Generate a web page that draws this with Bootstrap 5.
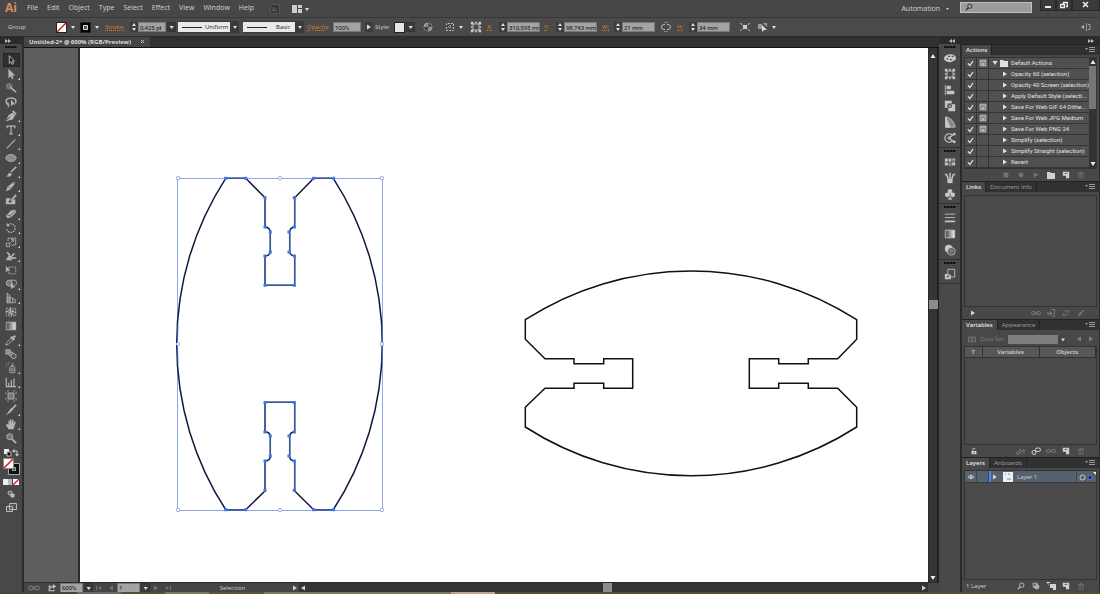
<!DOCTYPE html>
<html lang="en">
<head>
<meta charset="utf-8">
<meta name="viewport" content="width=device-width, initial-scale=1">
<title>Untitled-2* @ 600% (RGB/Preview)</title>
<link href="https://cdn.jsdelivr.net/npm/bootstrap@5.3.0/dist/css/bootstrap.min.css" rel="stylesheet">
<style>
:root{--bar:#484848;--dark:#2e2e2e;--line:#303030;--ink:#d2d2d2;--dim:#747474;--orange:#d5862f;
 --arrow:url("data:image/svg+xml,%3Csvg xmlns='http://www.w3.org/2000/svg' width='8' height='10'%3E%3Cpath d='M2 4h4l-2 3z' fill='%23ddd'/%3E%3C/svg%3E")}
body{font:6px/8px "Open Sans","Noto Sans",sans-serif;color:var(--ink);background:var(--bar);overflow:hidden}
button,input,select{font:inherit;color:inherit;padding:0;margin:0;border:0;background:none;border-radius:0;display:block}
button{display:flex;align-items:center;justify-content:center}
svg{display:block;flex:none}
a{color:inherit;text-decoration:none}
.s10{width:10px;height:10px}.s12{width:12px;height:12px}.s8{width:8px;height:8px}
.menubar{height:17px;font-size:7px;line-height:16px;background:#474747}
.logo{font:bold 12px/16px "Open Sans",sans-serif;color:#d98b61;width:27px;padding-left:5px}
.menus{gap:9px}
.search{width:72px;height:11px;background:#9c9c9c;border:1px solid #c0c0c0;color:#222;margin-top:2px}
.search input{width:58px;height:9px}
.wbtn{height:11px;background:#3a3a3a;border:1px solid #292929;border-top:0;color:#eee}
.wbtn.w-a{width:16px}.wbtn.w-c{width:28px}
.ctrl{display:grid;grid-template-columns:48px 24px 25px 73px 65px 64px 68px 48px 22px 25px 17px 57px 58px 59px 16px 63px 18px 1fr auto;height:20px;padding:0 9px 0 8px;border-top:1px solid #383838;border-bottom:1px solid #2a2a2a;background:#4a4a4a;align-items:center}
.ctrl>*{display:flex;align-items:center}
.cap{color:var(--orange);text-decoration:underline dotted 1px;text-underline-offset:1px}
.w-lab{width:25px}.w-xy{width:12px}.w-op{width:26px}.w-st{width:19px}
.field{height:10px;background:#a3a3a3;color:#111;padding-left:1px;border:1px solid #777;font-family:Roboto,sans-serif}
.f28{width:28px}.f33{width:33px}.f22{width:23px}
.spin{width:8px;height:10px;background:#3c3c3c;color:#ddd}
.pick{appearance:none;width:9px;height:10px;background:var(--arrow) center no-repeat #3a3a3a;color:transparent;margin-left:1px;border:1px solid #333}
.pick.bare{background-color:transparent;border:0}
.brush{appearance:none;width:61px;height:12px;color:#222;padding-left:27px;background:var(--arrow) right center no-repeat,linear-gradient(#222,#222) 4px center/20px 1px no-repeat,linear-gradient(#e9e9e9,#e9e9e9) left/52px 10px no-repeat,#3a3a3a}
.brush.far{padding-left:33px}
.sw{width:11px;height:11px;border:1px solid #222}
.sw.pale{background:#e6e6e6}
.tabs{height:11px;background:#303030;border-bottom:1px solid #111}
.doc-tab{background:#454545;width:126px;padding-left:5px;color:#dedede;line-height:10px;font-weight:700}
.hd{height:7px;background:#2b2b2b;color:#bbb}
.tools{width:24px;border-right:2px solid #2c2c2c;background:#484848;color:#b5b5b5}
.grip{height:6px;display:flex;align-items:center;justify-content:center}
.grip::before{content:"";width:12px;height:2px;background:repeating-linear-gradient(90deg,#111 0 2px,#2a2a2a 2px 3px)}
.grip.tall{height:9px;align-items:start;padding-top:2px}
.tool{width:17px;height:14px;margin:0 auto;position:relative;border:1px solid transparent}
.tool.on{background:#2f2f2f;border-color:#242424}
.tool.more::after{content:"";position:absolute;right:-1px;bottom:0;border:1px solid transparent;border-right-color:#ddd;border-bottom-color:#ddd}
.fit{min-height:0;min-width:0}
.paste{width:54px;background:#5e5e5e;flex:none}
.board{background:#fff;border-left:2px solid #2c2c2c;min-width:0}
.board svg{width:100%;height:100%}
.vbar{width:11px;background:#353535;border-right:2px solid #222;color:#eee;border-left:1px solid #292929}
.vthumb{width:9px;height:9px;background:#8c8c8c}
.g244{flex:244}.g269{flex:269}.g294{flex:294}.g306{flex:306}
.status{height:10px;background:#454545;border-top:1px solid #2b2b2b}
.lead-cell{width:36px}.nav-cell{width:24px}.info-cell{width:117px}.end-cell{width:11px}
.hscroll{background:#333}
.strip{height:2px;background:linear-gradient(90deg,#4a4034 0 7%,#6f685e 7% 11%,#584f3a 11% 15%,#80785f 15% 19%,#5a5138 19% 24%,#7e775c 24% 41%,#b9a98a 41% 45%,#554b35 45%)}
.icons{width:22px;background:#494949;border-right:1px solid #2a2a2a;color:#c6c6c6}
.igroup{border-bottom:1px solid #2e2e2e;padding-bottom:1px}
.igroup button{height:16px;width:100%}
.dock{width:139px;background:#484848;border-left:1px solid #2a2a2a;border-right:1px solid #2d2d2d}
.ptabs{height:11px;background:#313131;border-top:1px solid #222;color:#a4a4a4}
.ptabs button{padding:0 4px;height:10px;border-right:1px solid #222}
.ptabs .on{background:#484848;color:#e8e8e8;font-weight:600}
.box{margin:3px 2px 0;border:1px solid #333;background:#4a4a4a}
.box.near{margin-top:2px}
.foot{height:12px;padding:0 13px 0 7px;gap:5px}
.foot button{width:10px;height:10px}
.off{color:var(--dim)}
.act{height:11px;border-bottom:1px solid #343434;background:#505050;color:#e2e2e2;font-family:Roboto,sans-serif}
.act>*{height:10px}
.tick{appearance:none;width:12px;border-right:1px solid #343434;background:url("data:image/svg+xml,%3Csvg xmlns='http://www.w3.org/2000/svg' width='7' height='7'%3E%3Cpath d='M1 3.5l2 2L6 1' fill='none' stroke='%23ddd' stroke-width='1.3'/%3E%3C/svg%3E") center no-repeat}
.dlg{width:12px;border-right:1px solid #343434}
.twist{width:20px;justify-content:flex-end}
.act .nm{padding-left:2px;line-height:10px}
.abar{width:7px;background:#333;color:#eee;flex:none}
.athumb{height:43px;background:#767676;width:7px}
.g1{flex:112}.g2{flex:99}.g3{flex:110}
.dset{height:16px;padding:3px 4px 0 6px;color:#7f7f7f}
.dset select{appearance:none;width:59px;height:9px;background:var(--arrow) right center no-repeat,linear-gradient(#7d7d7d,#7d7d7d) left/50px 9px no-repeat,#444;margin-left:3px}
.vars{width:100%;table-layout:fixed;border-collapse:collapse}
.vars th{height:11px;padding:0;text-align:center;font-weight:600;border-right:1px solid #333;border-bottom:1px solid #333;background:#575757}
.vars .c1{width:17px}.vars .c2{width:57px}
.layer{height:12px;background:#56616f;border-bottom:1px solid #3a3a3a}
.cell{border-right:1px solid #3f4650;width:12px;height:11px}
.hue{width:2px;height:11px;background:#4f80ff}
.thumb{width:10px;height:10px}
</style>
</head>
<body>
<svg width="0" height="0" class="position-absolute" fill="none" stroke="currentColor" aria-hidden="true">
<defs>
<symbol id="sel" viewBox="0 0 14 14"><path d="M5 2v9l2-2 1.500 3 1.500-.8-1.500-2.800H11z" fill="#222" stroke="#ccc"/></symbol>
<symbol id="dsel" viewBox="0 0 14 14"><path d="M4 1v11l2.500-2.500L8 13l2-1-1.500-3.200H12z" fill="currentColor" stroke="none"/></symbol>
<symbol id="wand" viewBox="0 0 14 14"><path d="M6 6l7 6" stroke-width="1.800"/><path d="M5 1v3M5 6v3M1 5h3M6 5h3M2 2l2 2M8 2L6 4M2 8l2-2"/></symbol>
<symbol id="lasso" viewBox="0 0 14 14"><path d="M5 10C0 9 0 3 6 2.500s8 3 6 6" stroke-width="1.700"/><path d="M4 8c-2 0-2 3 0 3s1 2-1 2"/><path d="M7 4v8l2-2h3z" fill="currentColor" stroke="none"/></symbol>
<symbol id="pen" viewBox="0 0 14 14"><path d="M1 13L4 6l5-3 3 3-3 5z" fill="currentColor" stroke="none"/><path d="M9 1l4 4" stroke-width="2"/><path d="M2 12l4-4" stroke="#444"/></symbol>
<symbol id="type" viewBox="0 0 14 14"><path d="M2.500 5V2.500h9V5M7 2.500v9M5 11.500h4" stroke-width="1.400"/></symbol>
<symbol id="seg" viewBox="0 0 14 14"><path d="M2 12L12 2" stroke-width="1.300"/></symbol>
<symbol id="ell" viewBox="0 0 14 14"><ellipse cx="7" cy="7" rx="6" ry="4" fill="#8b8b8b"/></symbol>
<symbol id="brush" viewBox="0 0 14 14"><path d="M13 1L7 7" stroke-width="1.800"/><path d="M1 12c3 0 2-4 5-4l2 2c-1 3-5 3-7 2z" fill="currentColor" stroke="none"/></symbol>
<symbol id="pencil" viewBox="0 0 14 14"><path d="M1 13l2-5 7-6 2 2-6 7z" fill="currentColor" stroke="none"/><path d="M4 8l2 2M9 3l2 2" stroke="#444"/></symbol>
<symbol id="blob" viewBox="0 0 14 14"><path d="M1 5h6l-3 4c2 2 4 1 5-2l3-1v6H1z" fill="currentColor" stroke="none"/><path d="M13 1L7 8" stroke-width="2"/></symbol>
<symbol id="eraser" viewBox="0 0 14 14"><path d="M1 9l6-6 5-1 1 3-6 6-4 1z" fill="currentColor" stroke="none"/><path d="M2 8l4 1 6-6M6 9v3" stroke="#555"/></symbol>
<symbol id="rot" viewBox="0 0 14 14"><path d="M3 4a5 5 0 1 1-1 4" stroke-width="1.300" stroke-dasharray="2 1"/><path d="M2 1v4h4z" fill="currentColor" stroke="none"/></symbol>
<symbol id="scale" viewBox="0 0 14 14"><path d="M1.500 8.500h4v4h-4zM3.500 6V2.500h9v8h-5M6 8l4-4M7 4h3v3"/></symbol>
<symbol id="warp" viewBox="0 0 14 14"><path d="M4 7c2 0 3 4 9 2M2 3c2 0 2 2 4 3M7 8l4-4" stroke-width="1.800"/><path d="M1 12l3-5 5 5z" fill="currentColor" stroke="none"/></symbol>
<symbol id="free" viewBox="0 0 14 14"><path d="M4.500 3.500h8v8h-8z" stroke-dasharray="2 1"/><path d="M1 2v8l2-2h3z" fill="currentColor" stroke="none"/></symbol>
<symbol id="build" viewBox="0 0 14 14"><circle cx="5" cy="6" r="3.500" fill="#777"/><path d="M6 2.500h4a3 3 0 0 1 1 6"/><path d="M7 5v8l2-2h3z" fill="currentColor" stroke="none"/></symbol>
<symbol id="persp" viewBox="0 0 14 14"><path d="M2.500 1v12M2 2l4 2v9M2 6h4l6 3v3.500H2M9 7v5"/><path d="M2 6h4v6H2z" fill="currentColor" stroke="none" opacity=".6"/></symbol>
<symbol id="mesh" viewBox="0 0 14 14"><path d="M1.500 2.500h11v9h-11z" stroke-dasharray="2 1"/><path d="M1 7c3-3 4 3 6 0s4 2 6 0M7 2c-3 3 2 5 0 10M4 4l2 2M10 4L8 6M4 10l2-2M10 10L8 8" stroke-width="1.300"/></symbol>
<linearGradient id="gr"><stop stop-color="#444"/><stop offset="1" stop-color="#eee"/></linearGradient>
<symbol id="grad" viewBox="0 0 14 14"><path d="M1.500 2.500h11v9h-11z" fill="url(#gr)"/></symbol>
<symbol id="drop" viewBox="0 0 14 14"><path d="M1 13l1-3 5-5 2 2-5 5z"/><path d="M7 3l4 4M9 5l3-3" stroke-width="2.200"/></symbol>
<symbol id="blend" viewBox="0 0 14 14"><path d="M1 2h5v5H1z" fill="#888"/><circle cx="7" cy="7" r="2.500" fill="#777"/><circle cx="10" cy="9.500" r="3" fill="#555"/></symbol>
<symbol id="spray" viewBox="0 0 14 14"><rect x="5.500" y="5.500" width="6" height="7" rx="1"/><circle cx="8.500" cy="9" r="1.500"/><path d="M7 4h3M8 2h2M1 2h1M3 3h1M1 5h1M4 1h1"/></symbol>
<symbol id="graph" viewBox="0 0 14 14"><path d="M1.500 2v10.500H13M4.500 12V8M7.500 12V5M10.500 12V3" stroke-width="1.400"/></symbol>
<symbol id="artb" viewBox="0 0 14 14"><path d="M3.500 3.500h7v7h-7z" fill="#777"/><path d="M3.500 0v2M10.500 0v2M3.500 12v2M10.500 12v2M0 3.500h2M0 10.500h2M12 3.500h2M12 10.500h2"/></symbol>
<symbol id="slice" viewBox="0 0 14 14"><path d="M1 13l6-8 3 1-4 4z" fill="currentColor" stroke="none"/><path d="M8 6l5-5" stroke-width="1.800"/></symbol>
<symbol id="hand" viewBox="0 0 14 14"><path d="M4 13L1 8l1-1 2 1V3h1.300v3.500L6 1.500h1.400v5L8.500 2H10v5l1.500-3 1.200.5L11 10l-1 3z" fill="currentColor" stroke="none"/></symbol>
<symbol id="zoomt" viewBox="0 0 14 14"><circle cx="5.500" cy="5.500" r="3.500" fill="#777"/><path d="M8 8l5 5" stroke-width="2"/></symbol>
<symbol id="mag" viewBox="0 0 10 10"><circle cx="6" cy="4" r="2.700"/><path d="M4 6L1 9" stroke-width="1.400"/></symbol>
<symbol id="tu" viewBox="0 0 8 8"><path d="M1.500 6h5L4 2z" fill="currentColor" stroke="none"/></symbol>
<symbol id="td" viewBox="0 0 8 8"><path d="M1.500 2h5L4 6z" fill="currentColor" stroke="none"/></symbol>
<symbol id="tr" viewBox="0 0 8 8"><path d="M2 1.500v5L6 4z" fill="currentColor" stroke="none"/></symbol>
<symbol id="tl" viewBox="0 0 8 8"><path d="M6 1.500v5L2 4z" fill="currentColor" stroke="none"/></symbol>
<symbol id="first" viewBox="0 0 8 8"><path d="M1.500 2v4" /><path d="M6 2v4L3 4z" fill="currentColor" stroke="none"/></symbol>
<symbol id="last" viewBox="0 0 8 8"><path d="M6.500 2v4"/><path d="M2 2v4l3-2z" fill="currentColor" stroke="none"/></symbol>
<symbol id="ud" viewBox="0 0 8 10"><path d="M2 4h4L4 1zM2 6h4L4 9z" fill="currentColor" stroke="none"/></symbol>
<symbol id="ff" viewBox="0 0 8 8"><path d="M1 2v4l3-2zM4 2v4l3-2z" fill="currentColor" stroke="none"/></symbol>
<symbol id="rw" viewBox="0 0 8 8"><path d="M4 2v4L1 4zM7 2v4L4 4z" fill="currentColor" stroke="none"/></symbol>
<symbol id="pm" viewBox="0 0 10 8"><path d="M0 3h3L1.500 5zM4 2h6v1H4zM4 4h6v1H4zM4 6h6v1H4z" fill="#999" stroke="none"/></symbol>
<symbol id="fold" viewBox="0 0 10 10"><path d="M1 2h3l1 1h4v6H1z" fill="currentColor" stroke="none"/></symbol>
<symbol id="new" viewBox="0 0 10 10"><path d="M1 1h8v8H5V6H1z" fill="currentColor" stroke="none"/><path d="M1 8h3v1M3 3h4" stroke="#555"/></symbol>
<symbol id="trash" viewBox="0 0 10 10"><path d="M1 3h8M4 3V1.500h2V3M2.500 3v6h5V3M4.500 4v4"/></symbol>
<symbol id="stop" viewBox="0 0 10 10"><path d="M2 2h6v6H2z" fill="currentColor" stroke="none"/></symbol>
<symbol id="rec" viewBox="0 0 10 10"><circle cx="5" cy="5" r="3" fill="currentColor" stroke="none"/></symbol>
<symbol id="play" viewBox="0 0 10 10"><path d="M2 2l6 3-6 3z" fill="currentColor" stroke="none"/></symbol>
<symbol id="chain" viewBox="0 0 10 10"><rect x="0.500" y="3.500" width="4" height="3" rx="1.500"/><rect x="5.500" y="3.500" width="4" height="3" rx="1.500"/><path d="M3 5h4"/></symbol>
<symbol id="chain2" viewBox="0 0 10 10"><circle cx="3" cy="6.500" r="2"/><rect x="4.500" y="2" width="5" height="3.500" rx="1.700"/></symbol>
<symbol id="goto" viewBox="0 0 10 10"><path d="M1 4.500h3V3l3 2.500L4 8V6.500H1z" fill="currentColor" stroke="none"/><path d="M5 1.500h3.500v7H6" stroke="currentColor" fill="none"/></symbol>
<symbol id="upd" viewBox="0 0 10 10"><path d="M8.500 4A3.500 3.500 0 0 0 2 4M1.500 6A3.500 3.500 0 0 0 8 6M8.500 1v3h-3M1.500 9V6h3"/></symbol>
<symbol id="edit" viewBox="0 0 10 10"><path d="M1 9l1-3 6-5 1 1-5 6z" fill="currentColor" stroke="none"/></symbol>
<symbol id="lock" viewBox="0 0 10 10"><path d="M2 5h6v4H2z" fill="currentColor" stroke="none"/><path d="M3.500 5V3a1.500 1.500 0 0 1 3 0"/><path d="M5 6v2" stroke="#444"/></symbol>
<symbol id="mkvar" viewBox="0 0 10 10"><circle cx="2" cy="7" r="1.500"/><path d="M4 8V3l2 3 2-3v5"/></symbol>
<symbol id="clip" viewBox="0 0 10 10"><path d="M1.500 1.500h5v5h-5z"/><circle cx="6" cy="6" r="2.700" fill="currentColor" fill-opacity=".5"/></symbol>
<symbol id="sub" viewBox="0 0 10 10"><path d="M4 3h6v6H7V7H4zM0 1h4v1H2l2 3z" fill="currentColor" stroke="none"/></symbol>
<symbol id="eye" viewBox="0 0 10 10"><path d="M1 5q4-5 8 0q-4 4-8 0z"/><circle cx="5" cy="5" r="1.300" fill="currentColor"/></symbol>
<symbol id="dlg" viewBox="0 0 10 10"><path d="M1.500 1.500h7v7h-7zM2 3.500h6M3 5.500h4M3 7h4"/></symbol>
<symbol id="cam" viewBox="0 0 10 10"><path d="M.5 2.500h9v6h-9z"/><circle cx="5" cy="5.500" r="1.700"/></symbol>
<symbol id="color" viewBox="0 0 14 14"><path d="M0 8C0 1 14 1 14 7c0 3-3 3-4 4S1 13 0 8z" fill="currentColor" stroke="none"/><path d="M3 8h2M5 5h2M9 5h2M7 9h2" stroke="#444" stroke-width="1.500"/></symbol>
<symbol id="xform" viewBox="0 0 14 14"><path d="M3.500 3.500h7v7h-7z"/><path d="M1 1h3v3H1zM10 1h3v3h-3zM1 10h3v3H1zM10 10h3v3h-3zM6 1h2v2H6zM6 11h2v2H6zM1 6h2v2H1zM11 6h2v2h-2z" fill="currentColor" stroke="none"/></symbol>
<symbol id="align" viewBox="0 0 14 14"><path d="M1.500 1v12"/><path d="M3 2h5v4H3zM3 8h9v4H3z" fill="currentColor" stroke="none"/></symbol>
<symbol id="path" viewBox="0 0 14 14"><path d="M1 1h8v3H4v5H1zM5 5h8v8H5z" fill="currentColor" stroke="none"/><path d="M5.500 5.500h3v3h-3z" stroke="#333"/></symbol>
<symbol id="guide" viewBox="0 0 14 14"><path d="M2 13V1c6 1 10 6 11 12z" fill="currentColor" fill-opacity=".5"/><path d="M2 13V1l5 12z" fill="currentColor"/></symbol>
<symbol id="kul" viewBox="0 0 14 14"><path d="M10 4a5 5 0 1 0 0 6M6 7l6-5M6 7l6 5" stroke-width="1.300"/><circle cx="12" cy="2.500" r="1.200" fill="currentColor"/><circle cx="12" cy="11.500" r="1.200" fill="currentColor"/><circle cx="6" cy="7" r="1.500"/></symbol>
<symbol id="swat" viewBox="0 0 14 14"><path d="M1 3h12v8H1z" fill="currentColor" stroke="none"/><path d="M1 7h12M5 3v8M9 3v8" stroke="#444"/><path d="M10 4h2v2h-2zM6 8h2v2H6z" fill="#666" stroke="none"/></symbol>
<symbol id="brs" viewBox="0 0 14 14"><path d="M4 8h6v5H4z" fill="currentColor" stroke="none"/><path d="M5 8L3 3M7 8V1M9 8l2-5M1 3h3M10 3h3" stroke-width="1.700"/></symbol>
<symbol id="club" viewBox="0 0 14 14"><circle cx="7" cy="4" r="2.700" fill="currentColor" stroke="none"/><circle cx="3.800" cy="8" r="2.700" fill="currentColor" stroke="none"/><circle cx="10.200" cy="8" r="2.700" fill="currentColor" stroke="none"/><path d="M7 6v5l2 2H5l2-2" fill="currentColor"/></symbol>
<symbol id="strk" viewBox="0 0 14 14"><path d="M1 2.500h12M1 6.500h12" /><path d="M1 11h12" stroke-width="2"/></symbol>
<symbol id="transp" viewBox="0 0 14 14"><circle cx="5.500" cy="5.500" r="4.500" fill="currentColor" stroke="none"/><circle cx="8.500" cy="8.500" r="3.500" fill="#777" stroke="#444"/><circle cx="8.500" cy="8.500" r="4.500"/></symbol>
<symbol id="symb" viewBox="0 0 14 14"><path d="M4.500 7V1.500h8v9H8"/><path d="M1 7h3l1-1v2h3v5H1z" fill="currentColor" stroke="none"/><circle cx="4.500" cy="10" r="1.200" fill="#444" stroke="none"/></symbol>
<symbol id="globe" viewBox="0 0 10 10"><circle cx="5" cy="5" r="4" fill="#888" stroke="#aaa"/><path d="M5 1a4 4 0 0 1 4 4H5z" fill="#555" stroke="none"/><path d="M1 5h4v4a4 4 0 0 1-4-4z" fill="#444" stroke="none"/></symbol>
<symbol id="dots" viewBox="0 0 10 10"><path d="M1.500 3V1.500H8.500V8.500H1.500V5" stroke-dasharray="2 1"/><path d="M3 5h4M5 3v4" stroke-dasharray="1 1"/></symbol>
<symbol id="unlink" viewBox="0 0 10 10"><path d="M4 2.500H3a2.500 2.500 0 0 0 0 5H4M6 2.500h1a2.500 2.500 0 0 1 0 5H6M4 0v1M6 0v1M4 9v1M6 9v1"/></symbol>
<symbol id="iso" viewBox="0 0 10 10"><path d="M3 3h4v4H3z" fill="#ccc" stroke="none"/><path d="M0 1l2.500 2M10 1L7.500 3M0 9l2.500-2M10 9L7.500 7"/></symbol>
<symbol id="simi" viewBox="0 0 10 10"><path d="M0 2h4v5H0zM5 1h4v4" fill="#999" stroke="none"/><path d="M4 3v7l2-2h3z" fill="#ddd" stroke="none"/></symbol>
<symbol id="dockm" viewBox="0 0 10 10"><path d="M0 5l3-2v4z" fill="#bbb" stroke="none"/><path d="M5.500 1v8M7 2.500h2v5H7" stroke="#999"/></symbol>
</defs>
</svg>

<div class="d-flex flex-column vh-100">
<header class="menubar d-flex">
  <div class="logo">Ai</div>
  <nav class="menus d-flex" aria-label="Main">
    <a href="#">File</a><a href="#">Edit</a><a href="#">Object</a><a href="#">Type</a><a href="#">Select</a><a href="#">Effect</a><a href="#">View</a><a href="#">Window</a><a href="#">Help</a>
  </nav>
  <div class="d-flex align-items-center gap-2 ms-3">
    <button aria-label="Bridge"><svg class="s10"><rect x=".5" y=".5" width="9" height="9" fill="#383838" stroke="#555"/><path d="M3 3v4h1.500V5H3M6 7V5h1" fill="none" stroke="#606060"/></svg></button>
    <button class="ms-1" aria-label="Arrange documents"><svg width="18" height="10"><path d="M0 1h5v8H0zM6 1h4v3H6zM6 5h4v4H6z" fill="#ccc"/><path d="M13 4h4l-2 3z" fill="#ddd"/></svg></button>
  </div>
  <div class="d-flex ms-auto">
    <button>Automation<svg class="s8 ms-1"><path d="M2 3h3L3.500 5z" fill="#ccc"/></svg></button>
    <label class="search d-flex ms-2 me-1"><svg class="s8 mx-1" stroke="currentColor" fill="none"><use href="#mag"/></svg><input type="search" aria-label="Search"></label>
    <div class="d-flex ms-1">
      <button class="wbtn w-a" aria-label="Minimize"><svg class="s8"><path d="M1 5h6v2H1z" fill="#eee"/></svg></button>
      <button class="wbtn w-a" aria-label="Restore"><svg class="s8" fill="none" stroke="#eee"><path d="M3.500 3V1.500h4v4H6M.5 3.500h4v3h-4z" stroke-width="1.400"/></svg></button>
      <button class="wbtn w-c" aria-label="Close"><svg class="s8"><path d="M1 1l5 5M6 1L1 6" stroke="#eee" stroke-width="1.600"/></svg></button>
    </div>
  </div>
</header>

<div class="ctrl" role="toolbar" aria-label="Control">
  <div>Group</div>
  <div><button class="sw" aria-label="Fill"><svg width="9" height="9"><path d="M0 0h9v9H0z" fill="#fff"/><path d="M0 9L9 0" stroke="#e02020" stroke-width="1.500"/></svg></button><select class="pick bare" aria-label="Fill colour"><option></option></select></div>
  <div><button class="sw" aria-label="Stroke"><svg width="9" height="9"><path d="M0 0h9v9H0z" fill="#000"/><path d="M2.500 2.500h4v4h-4z" stroke="#ddd" fill="#555"/></svg></button><select class="pick bare" aria-label="Stroke colour"><option></option></select></div>
  <div><label class="cap w-lab" for="sw">Stroke:</label><button class="spin" aria-label="Step stroke"><svg class="s10"><use href="#ud"/></svg></button><input class="field f28" id="sw" value="0,425 pt"><select class="pick" aria-label="Stroke presets"><option></option></select></div>
  <div><select class="brush" aria-label="Width profile"><option>Uniform</option></select></div>
  <div><select class="brush far" aria-label="Brush"><option>Basic</option></select></div>
  <div><label class="cap w-op" for="op">Opacity:</label><input class="field f28" id="op" value="100%"><button class="spin ms-1" aria-label="Opacity slider"><svg class="s8"><use href="#tr"/></svg></button></div>
  <div><label class="w-st" for="gs">Style:</label><span class="sw pale"></span><select class="pick" id="gs"><option></option></select></div>
  <div><button aria-label="Recolor"><svg class="s10"><use href="#globe"/></svg></button></div>
  <div><button aria-label="Align"><svg class="s10"><use href="#dots" stroke="#bbb" fill="none"/></svg></button><select class="pick bare" aria-label="Align options"><option></option></select></div>
  <div><button aria-label="Reference point"><svg class="s12"><use href="#xform" stroke="#ccc" color="#ccc" fill="none"/></svg></button></div>
  <div><label class="cap w-xy" for="px">X:</label><button class="spin" aria-label="Step X"><svg class="s10"><use href="#ud"/></svg></button><input class="field f33" id="px" value="310,595 mm"></div>
  <div><label class="cap w-xy" for="py">Y:</label><button class="spin" aria-label="Step Y"><svg class="s10"><use href="#ud"/></svg></button><input class="field f33" id="py" value="98,743 mm"></div>
  <div><label class="cap w-xy" for="pw">W:</label><button class="spin" aria-label="Step W"><svg class="s10"><use href="#ud"/></svg></button><input class="field f33" id="pw" value="21 mm"></div>
  <div><button aria-label="Constrain"><svg class="s10"><use href="#unlink" stroke="#bbb" fill="none"/></svg></button></div>
  <div><label class="cap w-xy" for="ph">H:</label><button class="spin" aria-label="Step H"><svg class="s10"><use href="#ud"/></svg></button><input class="field f33" id="ph" value="34 mm"></div>
  <div><button aria-label="Isolate"><svg class="s10"><use href="#iso" stroke="#bbb" fill="none"/></svg></button></div>
  <div><button aria-label="Select similar"><svg class="s10"><use href="#simi"/></svg></button><select class="pick bare" aria-label="Similar options"><option></option></select></div>
  <div><button aria-label="Panel menu"><svg class="s10" fill="none"><use href="#dockm"/></svg></button></div>
</div>

<div class="d-flex flex-fill fit">
  <aside class="tools flex-shrink-0">
    <div class="hd ps-1"><svg class="s8"><use href="#ff"/></svg></div>
    <div class="grip tall"></div>
    <div id="toolList"></div>
    <div class="d-flex justify-content-between px-1 pt-1">
      <button aria-label="Default colours"><svg class="s8"><path d="M0 0h5v5H0z" fill="#eee"/><path d="M3 3h4v4H3z" fill="#111" stroke="#bbb"/></svg></button>
      <button aria-label="Swap colours"><svg class="s8" fill="none" stroke="#ccc"><path d="M2 2h3v4"/><path d="M0 2l2.500-2v4zM3 5h4L5 7.500z" fill="#ccc" stroke="none"/></svg></button>
    </div>
    <button aria-label="Fill and stroke"><svg width="22" height="20"><path d="M10.500 8.500h7v7h-7z" fill="none" stroke="#111" stroke-width="3"/><path d="M8.500 6.500h11v11h-11zM12.500 10.500h3v3h-3z" fill="none" stroke="#aaa"/><path d="M3.500 1.500h10v10h-10z" fill="#fff" stroke="#888"/><path d="M4 11L13 2" stroke="#e02020" stroke-width="1.600"/></svg></button>
    <button aria-label="Colour mode"><svg width="22" height="10"><path d="M3 2h5v6H3z" fill="#eee"/><path d="M8 2h4v6H8z" fill="#bbb"/><path d="M13 2h6v6h-6z" fill="#fff"/><path d="M13 8l6-6" stroke="#e02020" stroke-width="1.500"/></svg></button>
    <button class="tool" aria-label="Drawing mode"><svg class="s10" fill="#666" stroke="#bbb"><circle cx="4" cy="4" r="2"/><path d="M5 5h3v3H5z" fill="#bbb"/></svg></button>
    <button class="tool" aria-label="Screen mode"><svg class="s12" fill="#555" stroke="#bbb"><path d="M4.500 1.500h7v6h-7zM1.500 4.500h6v5h-6z"/></svg></button>
  </aside>

  <main class="d-flex flex-column flex-fill fit">
    <div class="tabs d-flex"><div class="doc-tab d-flex">Untitled-2* @ 600% (RGB/Preview)<button class="ms-2" aria-label="Close tab"><svg class="s8"><path d="M2 2l3 3M5 2L2 5" stroke="#bbb"/></svg></button></div></div>
    <div class="d-flex flex-fill fit">
      <div class="paste"></div>
      <div class="board flex-fill">
        <svg viewBox="80 48 848 534" preserveAspectRatio="xMinYMin meet" fill="none" role="img" aria-label="Artboard">
          <path d="M177.500 178.500h205v332h-205z" stroke="#8fa6ee"/>
          <path stroke="#14183a" stroke-width="1.500" d="M225.700 178.300H245.700L265 197.700V227Q270 227.500 270.300 232V252Q270 255.500 265 256V285.300H294.700V256Q290 255.500 289.700 252V232Q290 227.500 294.700 227V197.700L313.700 178.300H333.300A304.700 304.700 0 0 1 333.300 509.700H313.700L294.700 491V461Q290 460.500 289.700 456.700V436.700Q290 432 294.700 431.700V402.300H265V431.700Q270 432 270.300 436.700V456.700Q270 460.500 265 461V491L245.700 509.700H225.700A304.700 304.700 0 0 1 225.700 178.300Z"/>
          <path stroke="#4a78ee" stroke-width=".8" d="M225.700 178.300H245.700M313.700 178.300h19.600M265 197.700V227M270.300 232V252M265 256V285.300H294.700V256M289.700 252V232M294.700 227V197.700M225.700 509.700H245.700M313.700 509.700h19.600M265 491V461M270.300 456.700V436.700M265 431.700V402.300H294.700V431.700M289.700 436.700V456.700M294.700 461V491M178 325q-1 19 0 38M382 325q1 19 0 38"/>
          <g id="nodes" fill="#3b78f5"></g>
          <g id="handles" fill="#fff" stroke="#8c96d8"></g>
          <path stroke="#111" stroke-width="1.500" d="M525.300 319.700A306 306 0 0 1 856.700 319.700V339.300L837.700 358.700H808.300V363.700H778.700V358.700H749.300V388.300H778.700V383.300H808.300V388.300H837.700L856.700 407.300V427A306 306 0 0 1 525.300 427V407.300L545 388.300H574V383.300H603.700V388.300H632.700V358.700H603.700V363.700H574V358.700H545L525.300 339.300Z"/>
        </svg>
      </div>
      <div class="vbar d-flex flex-column align-items-center pt-1">
        <svg class="s8"><use href="#tu"/></svg><div class="g244"></div><div class="vthumb"></div><div class="g269"></div><svg class="s8"><use href="#td"/></svg>
      </div>
    </div>
    <div class="status d-flex align-items-center">
      <div class="lead-cell d-flex align-items-center ps-1"><svg class="s12 off me-2" stroke="currentColor" fill="none"><use href="#chain"/></svg><svg class="s8" fill="none" stroke="#ccc" viewBox="0 0 10 10"><path d="M4 2.500H1.500v6h6V7M3 6q0-3 5-3M6 1l3 2-3 2" stroke-width="1.300"/></svg></div>
      <input class="field f22" aria-label="Zoom" value="600%"><select class="pick" aria-label="Zoom levels"><option></option></select>
      <div class="nav-cell d-flex off justify-content-around"><svg class="s8" stroke="currentColor"><use href="#first"/></svg><svg class="s8"><use href="#tl"/></svg></div>
      <input class="field f22" aria-label="Artboard" value="1"><select class="pick" aria-label="Artboards"><option></option></select>
      <div class="nav-cell d-flex off justify-content-around"><svg class="s8"><use href="#tr"/></svg><svg class="s8" stroke="currentColor"><use href="#last"/></svg></div>
      <div class="info-cell text-center">Selection</div>
      <svg class="s8"><use href="#tr"/></svg>
      <div class="hscroll d-flex align-items-center flex-fill h-100"><svg class="s8"><use href="#tl"/></svg><div class="g294"></div><div class="vthumb"></div><div class="g306"></div><svg class="s8"><use href="#tr"/></svg></div>
      <div class="end-cell"></div>
    </div>
  </main>

  <aside class="icons flex-shrink-0">
    <div class="hd d-flex justify-content-end pe-1"><svg class="s8"><use href="#rw"/></svg></div>
    <div id="iconDock"></div>
  </aside>

  <aside class="dock d-flex flex-column flex-shrink-0">
    <div class="hd d-flex justify-content-end pe-1"><svg class="s8"><use href="#ff"/></svg></div>
    <div class="ptabs d-flex"><button class="on">Actions</button><svg class="ms-auto me-1" width="10" height="8"><use href="#pm"/></svg></div>
    <div class="box near d-flex">
      <div class="flex-fill fit overflow-hidden" id="acts"></div>
      <div class="abar d-flex flex-column align-items-center"><svg class="s8"><use href="#tu"/></svg><div class="athumb"></div><svg class="s8 mt-auto"><use href="#td"/></svg></div>
    </div>
    <div class="foot d-flex align-items-center justify-content-end">
      <button class="off" aria-label="Stop"><svg class="s8"><use href="#stop"/></svg></button><button class="off" aria-label="Record"><svg class="s8"><use href="#rec"/></svg></button><button class="off" aria-label="Play"><svg class="s8"><use href="#play"/></svg></button><button aria-label="New set"><svg class="s10"><use href="#fold"/></svg></button><button aria-label="New action"><svg class="s8"><use href="#new"/></svg></button><button class="off" aria-label="Delete"><svg class="s8" stroke="currentColor" fill="none"><use href="#trash"/></svg></button>
    </div>

    <div class="ptabs d-flex"><button class="on">Links</button><button>Document Info</button><svg class="ms-auto me-1" width="10" height="8"><use href="#pm"/></svg></div>
    <div class="box g1"></div>
    <div class="foot d-flex align-items-center">
      <svg class="s8 me-auto"><use href="#tr"/></svg>
      <button class="off" aria-label="Relink"><svg class="s10" stroke="currentColor" fill="none"><use href="#chain"/></svg></button><button class="off" aria-label="Go to link"><svg class="s10"><use href="#goto"/></svg></button><button class="off" aria-label="Update"><svg class="s8" stroke="currentColor" fill="none"><use href="#upd"/></svg></button><button class="off" aria-label="Edit original"><svg class="s8"><use href="#edit"/></svg></button>
    </div>

    <div class="ptabs d-flex"><button class="on">Variables</button><button>Appearance</button><svg class="ms-auto me-1" width="10" height="8"><use href="#pm"/></svg></div>
    <div class="dset d-flex align-items-center"><svg class="s8 me-1" stroke="currentColor" fill="none"><use href="#cam"/></svg><label for="ds">Data Set:</label><select id="ds"><option></option></select><svg class="s8 ms-auto me-1"><use href="#tl"/></svg><svg class="s8"><use href="#tr"/></svg></div>
    <div class="box g2 mt-0"><table class="vars"><thead><tr><th class="c1">T</th><th class="c2">Variables</th><th>Objects</th></tr></thead></table></div>
    <div class="foot d-flex align-items-center">
      <button class="me-auto" aria-label="Lock"><svg class="s8" stroke="currentColor" fill="none"><use href="#lock"/></svg></button>
      <button class="off" aria-label="Bind object"><svg class="s10" stroke="currentColor" fill="none"><use href="#mkvar"/></svg></button><button aria-label="Make dynamic"><svg class="s10" stroke="currentColor" fill="none"><use href="#chain2"/></svg></button><button class="off" aria-label="Unbind"><svg class="s10" stroke="currentColor" fill="none"><use href="#chain"/></svg></button><button aria-label="New variable"><svg class="s8"><use href="#new"/></svg></button><button class="off" aria-label="Delete variable"><svg class="s8" stroke="currentColor" fill="none"><use href="#trash"/></svg></button>
    </div>

    <div class="ptabs d-flex"><button class="on">Layers</button><button>Artboards</button><svg class="ms-auto me-1" width="10" height="8"><use href="#pm"/></svg></div>
    <div class="box near g3">
      <div class="layer d-flex align-items-center">
        <button class="cell" aria-label="Visibility"><svg class="s8" stroke="currentColor" fill="none"><use href="#eye"/></svg></button><span class="cell"></span><span class="hue"></span>
        <svg class="s8"><use href="#tr"/></svg>
        <svg class="thumb mx-1"><path d="M0 0h10v10H0z" fill="#eee"/><path d="M2 2h1M5 2h2M4 7h4" stroke="#888"/></svg>
        <span>Layer 1</span>
        <svg class="ms-auto" width="20" height="10"><path d="M.5 0v10" stroke="#3f4650"/><circle cx="6.500" cy="5.500" r="2.500" fill="none" stroke="#ccc"/><circle cx="14" cy="5.500" r="2" fill="#111d4a" stroke="#4f80ff"/><path d="M17 0h3v3z" fill="#eee"/></svg>
      </div>
    </div>
    <div class="foot d-flex align-items-center ps-0">
      <span class="ms-1 me-auto">1 Layer</span>
      <button aria-label="Locate"><svg class="s8" stroke="currentColor" fill="none"><use href="#mag"/></svg></button><button aria-label="Clipping mask"><svg class="s8" stroke="currentColor" fill="none"><use href="#clip"/></svg></button><button aria-label="New sublayer"><svg class="s10"><use href="#sub"/></svg></button><button aria-label="New layer"><svg class="s8"><use href="#new"/></svg></button><button class="off" aria-label="Delete layer"><svg class="s8" stroke="currentColor" fill="none"><use href="#trash"/></svg></button>
    </div>
  </aside>
</div>
<div class="strip"></div>
</div>

<script src="https://cdn.jsdelivr.net/npm/bootstrap@5.3.0/dist/js/bootstrap.bundle.min.js"></script>
<script>
const icon = (id, c) => `<svg class="${c}" fill="none" stroke="currentColor"><use href="#${id}"/></svg>`;
const plain = "sel wand lasso blob free mesh grad blend artb zoomt".split(" ");
document.getElementById("toolList").innerHTML =
  "sel dsel wand lasso pen type seg ell brush pencil blob eraser rot scale warp free build persp mesh grad drop blend spray graph artb slice hand zoomt".split(" ")
  .map(t => `<button class="tool${t === "sel" ? " on" : ""}${plain.includes(t) ? "" : " more"}" aria-label="${t}">${icon(t, "s12")}</button>`).join("");

document.getElementById("iconDock").innerHTML =
  ["color xform align path guide kul", "swat brs club", "strk grad transp", "symb"]
  .map(g => `<div class="igroup"><div class="grip"></div>${g.split(" ").map(t => `<button aria-label="${t}">${icon(t, "s12")}</button>`).join("")}</div>`).join("");

const acts = [["Default Actions",1],["Opacity 60 (selection)"],["Opacity 40 Screen (selection)"],["Apply Default Style (selecti..."],["Save For Web GIF 64 Dithe...",1],["Save For Web JPG Medium",1],["Save For Web PNG 24",1],["Simplify (selection)"],["Simplify Straight (selection)"],["Revert"]];
document.getElementById("acts").innerHTML = acts.map(([n, d], i) =>
  `<div class="act d-flex align-items-center"><input type="checkbox" class="tick" checked aria-label="${n}"><span class="dlg d-flex align-items-center justify-content-center">${d ? icon("dlg", "s8") : ""}</span>` +
  (i ? `<span class="twist d-flex align-items-center">${icon("tr", "s8")}</span>` : `<span class="twist d-flex align-items-center">${icon("td", "s8")}${icon("fold", "s10")}</span>`) +
  `<span class="nm text-nowrap">${n}</span></div>`).join("");

const xs = [[225.7,178.3],[245.7,178.3],[265,197.7],[265,227],[270.3,232],[270.3,252],[265,256],[265,285.3]];
const nodes = xs.flatMap(([x, y]) => [[x, y], [559.3 - x, y], [x, 688 - y], [559.3 - x, 688 - y]]);
document.getElementById("nodes").innerHTML = nodes.map(([x, y]) => `<rect x="${x - 1.5}" y="${y - 1.5}" width="3" height="3"/>`).join("");
document.getElementById("handles").innerHTML = [[178,178],[280,178],[382,178],[178,344],[382,344],[178,510],[280,510],[382,510]]
  .map(([x, y]) => `<rect x="${x - 1.5}" y="${y - 1.5}" width="3" height="3" rx="1"/>`).join("");
</script>
</body>
</html>
